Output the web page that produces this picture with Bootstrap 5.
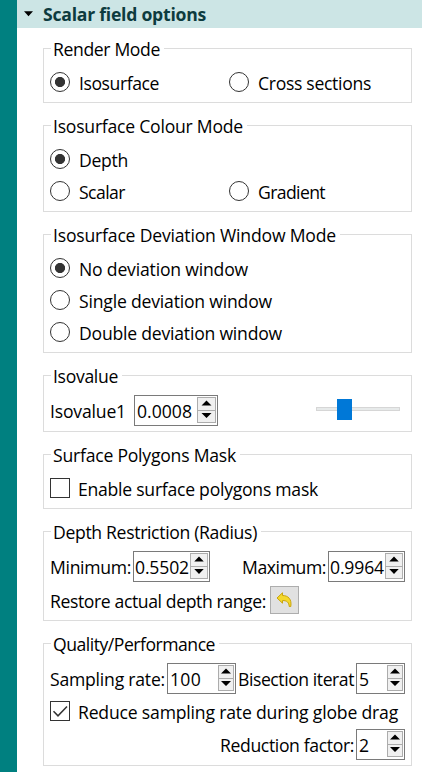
<!DOCTYPE html>
<html lang="en">
<head>
<meta charset="utf-8">
<meta name="viewport" content="width=device-width, initial-scale=1">
<title>Scalar field options</title>
<link href="https://cdn.jsdelivr.net/npm/bootstrap@5.3.0/dist/css/bootstrap.min.css" rel="stylesheet">
<style>
body{font:17.6px/22px "Open Sans","Noto Sans",sans-serif;color:#000;background:#fff;overflow:hidden}
.side{width:17px;background:#008080}
.head{height:28px;background:#cce5e5;color:#0d3b3e;padding-left:7px}
.head svg{margin-right:10px}
.head .t{top:0}
.groups{padding:20px 10px 0 26px;gap:22px}
.group{border:1px solid #dcdcdc;padding:0 6px 3px}
.group.tall{padding-bottom:4px}
.title{width:fit-content;height:22px;margin:-12px 0 7px 1px;padding:0 4px 0 2px;background:#fff}
.line{height:32px}
.fields{height:35px}
.t{display:inline-block;white-space:nowrap;position:relative;top:1px}
.fields .t{top:.4px}
.half{width:179px}
.opt{gap:9px}
.opt.check{gap:8px}
.check-line{height:30px;margin-bottom:1px}
.radio,.box{width:20px;height:20px;border:1px solid #333;background:#fff;flex:none}
.radio{border-radius:50%}
.radio.on{background:radial-gradient(circle,#333 0 4.7px,#fff 5.4px)}
.spin{height:31px;border:1px solid #7a7a7a;padding:1px 1px 1px 2px;background:#fff;flex:none}
.w84{width:84px}.w77{width:77px;padding-left:1px}.w69{width:69px}.w49{width:49px}
.arrows{width:19px;height:26px;flex:none;align-self:flex-start}
.arrows.narrow{width:16px}
.w77 .arrows{width:18px}
.tight{margin-left:2px}
.track{width:84px;height:4px;background:#e7eaea;border:1px solid #d6d6d6;margin:0 5px 3px 0}
.thumb{width:15px;height:21px;background:#0078d7;margin-left:20px}
.undo{width:29px;height:28px;border:1px solid #adadad;background:#e1e1e1;margin-left:4px}
</style>
<script src="https://cdn.jsdelivr.net/npm/bootstrap@5.3.0/dist/js/bootstrap.bundle.min.js"></script>
</head>
<body>
<svg width="0" height="0" class="position-absolute">
<symbol id="arrows" viewBox="0 0 19 26" preserveAspectRatio="none">
<rect x=".5" y=".5" width="18" height="13" fill="#f0f0f0" stroke="#acacac"/>
<rect x=".5" y="13.5" width="18" height="12" fill="#f0f0f0" stroke="#acacac"/>
<path d="M4.5 8.5L9.5 3.5L14.5 8.5ZM4.5 16L9.5 21L14.5 16Z"/>
</symbol>
<symbol id="arrows-narrow" viewBox="0 0 16 26">
<rect x=".5" y=".5" width="15" height="13" fill="#f0f0f0" stroke="#acacac"/>
<rect x=".5" y="13.5" width="15" height="12" fill="#f0f0f0" stroke="#acacac"/>
<path d="M3 8.5L8 3.5L13 8.5ZM3 16L8 21L13 16Z"/>
</symbol>
</svg>
<div class="d-flex vh-100">
<div class="side flex-shrink-0"></div>
<main class="flex-grow-1">
<div class="head d-flex align-items-center fw-bold"><svg width="9" height="6" viewBox="0 0 9 6"><path d="M0 .3H9L4.5 5.3Z"/></svg><span class="t" data-w="162">Scalar field options</span></div>
<div class="groups d-flex flex-column">

<section class="group tall"><div class="title"><span class="t" data-w="106">Render Mode</span></div>
<div class="line d-flex"><div class="opt half d-flex align-items-center"><i class="radio on"></i><span class="t" data-w="79">Isosurface</span></div><div class="opt d-flex align-items-center"><i class="radio"></i><span class="t" data-w="112">Cross sections</span></div></div></section>

<section class="group tall"><div class="title"><span class="t" data-w="189">Isosurface Colour Mode</span></div>
<div class="line opt d-flex align-items-center"><i class="radio on"></i><span class="t" data-w="48">Depth</span></div>
<div class="line d-flex"><div class="opt half d-flex align-items-center"><i class="radio"></i><span class="t" data-w="45">Scalar</span></div><div class="opt d-flex align-items-center"><i class="radio"></i><span class="t" data-w="66">Gradient</span></div></div></section>

<section class="group tall"><div class="title"><span class="t" data-w="282">Isosurface Deviation Window Mode</span></div>
<div class="line opt d-flex align-items-center"><i class="radio on"></i><span class="t" data-w="168">No deviation window</span></div>
<div class="line opt d-flex align-items-center"><i class="radio"></i><span class="t" data-w="192">Single deviation window</span></div>
<div class="line opt d-flex align-items-center"><i class="radio"></i><span class="t" data-w="202">Double deviation window</span></div></section>

<section class="group"><div class="title"><span class="t" data-w="64">Isovalue</span></div>
<div class="fields d-flex align-items-center justify-content-between"><div class="d-flex align-items-center"><span class="t" data-w="75">Isovalue1</span><div class="spin w84 d-flex align-items-center justify-content-between ms-2"><span class="t" data-w="54">0.0008</span><svg class="arrows"><use href="#arrows"/></svg></div></div>
<div class="track d-flex align-items-center"><div class="thumb"></div></div></div></section>

<section class="group tall"><div class="title"><span class="t" data-w="182">Surface Polygons Mask</span></div>
<div class="line d-flex opt check align-items-center"><i class="box"></i><span class="t" data-w="239">Enable surface polygons mask</span></div></section>

<section class="group tall"><div class="title"><span class="t" data-w="203">Depth Restriction (Radius)</span></div>
<div class="fields d-flex align-items-center justify-content-between"><div class="d-flex align-items-center"><span class="t" data-w="80">Minimum:</span><div class="spin w77 tight d-flex align-items-center justify-content-between"><span class="t" data-w="53">0.5502</span><svg class="arrows"><use href="#arrows"/></svg></div></div>
<div class="d-flex align-items-center"><span class="t" data-w="83">Maximum:</span><div class="spin w77 tight d-flex align-items-center justify-content-between"><span class="t" data-w="53">0.9964</span><svg class="arrows"><use href="#arrows"/></svg></div></div></div>
<div class="line d-flex align-items-center"><span class="t" data-w="215">Restore actual depth range:</span><div class="undo d-flex align-items-center justify-content-center"><svg width="18" height="18" viewBox="0 0 18 18"><path d="M1 7L6.5 1.8V4.5C12 4.5 16 8 14.8 15.5H13.2C13 11.5 11 9.5 6.5 9.5V12.2Z" fill="#f4d82c" stroke="#c9a40c"/></svg></div></div></section>

<section class="group"><div class="title"><span class="t" data-w="161">Quality/Performance</span></div>
<div class="fields d-flex align-items-center"><span class="t" data-w="114">Sampling rate:</span><div class="spin w69 tight d-flex align-items-center justify-content-between"><span class="t" data-w="30">100</span><svg class="arrows narrow"><use href="#arrows-narrow"/></svg></div><span class="t tight" data-w="115">Bisection iterat</span><div class="spin w49 ms-auto d-flex align-items-center justify-content-between"><span class="t">5</span><svg class="arrows narrow"><use href="#arrows-narrow"/></svg></div></div>
<div class="check-line d-flex opt check align-items-center"><i class="box"><svg class="d-block" width="18" height="18" viewBox="0 0 18 18"><path d="M2.5 9.2L7 13.8L16 4.5" fill="none" stroke="#333" stroke-width="1.5"/></svg></i><span class="t" data-w="319">Reduce sampling rate during globe drag</span></div>
<div class="fields d-flex align-items-center justify-content-end"><span class="t" data-w="133">Reduction factor:</span><div class="spin w49 tight d-flex align-items-center justify-content-between"><span class="t">2</span><svg class="arrows narrow"><use href="#arrows-narrow"/></svg></div></div></section>
</div>
</main>
</div>
<script>
// Track each caption so that it fills its assigned width.
document.querySelectorAll('[data-w]').forEach(function(e){
  var gap=(+e.dataset.w+1-e.getBoundingClientRect().width)/e.textContent.length;
  e.style.letterSpacing=gap.toFixed(3)+'px';
});
</script>
</body>
</html>
